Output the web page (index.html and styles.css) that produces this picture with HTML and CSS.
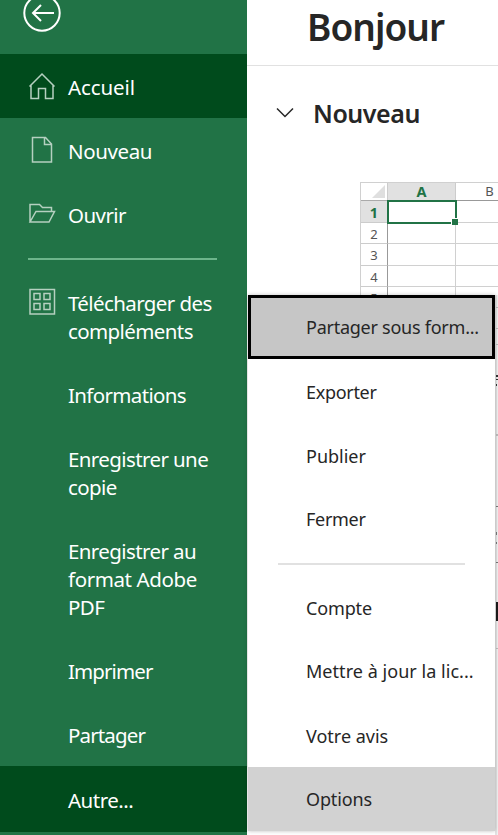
FILE: index.html
```html
<!DOCTYPE html>
<html lang="fr">
<head>
<meta charset="utf-8">
<title>Accueil</title>
<link rel="stylesheet" href="styles.css">
</head>
<body>
<div class="app">
  <nav class="side">
    <div class="back">
      <svg width="38" height="38" viewBox="0 0 38 38" fill="none" stroke="#fff" stroke-width="2"><circle cx="19" cy="19" r="17.700"/><path d="M31 19H10M18 11l-8 8 8 8"/></svg>
    </div>
    <a class="item top active"><svg class="icon" width="28" height="28" viewBox="0 0 28 28"><path d="M1.500 14.500L14 2l12.500 12.500M3 13V26.500H10.500V16.500H17.500V26.500H25V13"/></svg><span class="t-acc">Accueil</span></a>
    <a class="item top"><svg class="icon" width="28" height="28" viewBox="0 0 28 28"><path d="M4.500 1.500H17.500L23.500 8V26H4.500ZM16.500 1.500V8.500H23.500"/></svg><span class="t-nou">Nouveau</span></a>
    <a class="item top"><svg class="icon" width="28" height="28" viewBox="0 0 28 28"><path d="M2 22V4.500H11.500L14.500 7.500H23.500V11.500M2 22L8 11.500H26.500L21 22Z"/></svg><span class="t-ouv">Ouvrir</span></a>
    <hr class="rule">
    <a class="item"><svg class="icon" width="28" height="28" viewBox="0 0 28 28"><path d="M2 1.500H26.500V26H2ZM6 5.500H12V11.500H6ZM16 5.500H22V11.500H16ZM6 15.500H12V21.500H6ZM16 15.500H22V21.500H16Z"/></svg><span class="t-tel">Télécharger des<br>compléments</span></a>
    <a class="item"><span class="t-inf">Informations</span></a>
    <a class="item"><span class="t-enr">Enregistrer une<br>copie</span></a>
    <a class="item"><span class="t-pdf">Enregistrer au<br><span class="t-ado">format Adobe</span><br>PDF</span></a>
    <a class="item"><span class="t-imp">Imprimer</span></a>
    <a class="item short"><span class="t-par">Partager</span></a>
    <a class="item active last"><span class="t-aut">Autre...</span></a>
  </nav>
  <main class="main">
    <header class="hello"><h1>Bonjour</h1></header>
    <h2 class="section"><svg width="20" height="14" viewBox="0 0 20 14" fill="none" stroke="#262626" stroke-width="1.500"><path d="M2 2.500l8 8 8-8"/></svg><span>Nouveau</span></h2>
    <div class="sheet">
      <div class="corner"><svg width="13" height="13" viewBox="0 0 13 13"><path d="M13 0V13H0Z" fill="#dfdfdf"/></svg></div>
      <div class="col sel">A</div><div class="col">B</div>
      <div class="row sel">1</div><div class="cell picked"></div><div class="cell"></div>
      <div class="row">2</div><div class="cell"></div><div class="cell"></div>
      <div class="row">3</div><div class="cell"></div><div class="cell"></div>
      <div class="row">4</div><div class="cell"></div><div class="cell"></div>
      <div class="row">5</div><div class="cell"></div><div class="cell"></div>
    </div>
    <svg class="edge" width="3" height="540" viewBox="0 295 3 540">
      <path fill="#f1f1f1" d="M0 295h3v540H0z"/>
      <path fill="#e3e3e3" d="M0 295h2v540H0z"/>
      <path fill="#bdbdbd" d="M1 307h2v1H1zM1 328h2v1H1zM1 344h2v1H1zM1 434h2v2H1zM1 648h2v1H1z"/>
      <path fill="#333" d="M1 375h2v2H1zM1 379h2v1H1zM1 384h1v2H1z"/>
      <path fill="#777" d="M1 506h2v1H1zM1 532h1v3H1zM1 542h1v2H1zM1 562h2v1H1z"/>
      <path fill="#1c1c1c" d="M1 602h2v19H1z"/>
    </svg>
  </main>
  <div class="menu">
    <a class="opt focus"><span class="m-par">Partager sous form...</span></a>
    <a class="opt first"><span class="m-exp">Exporter</span></a>
    <a class="opt"><span>Publier</span></a>
    <a class="opt up"><span class="m-exp">Fermer</span></a>
    <hr class="line">
    <a class="opt"><span class="m-com">Compte</span></a>
    <a class="opt up"><span class="m-met">Mettre à jour la lic...</span></a>
    <a class="opt avis"><span>Votre avis</span></a>
    <a class="opt hover"><span class="m-com">Options</span></a>
  </div>
</div>
</body>
</html>
```
FILE: styles.css
```css
* { box-sizing: border-box; }
body { margin: 0; background: #fff; color: #262626; font-family: "Noto Sans", "Open Sans", sans-serif; }
.app { position: relative; display: flex; width: 498px; height: 835px; overflow: hidden; }
.side { width: 247px; flex: none; background: #217346; color: #fff; font-size: 20.500px; line-height: 28px; }
.back { height: 54px; padding-left: 23px; overflow: hidden; }
.back svg { display: block; margin-top: -6px; }
.item { display: flex; padding: 17px 0 19px 68px; white-space: nowrap; }
.item.top { padding: 19px 0 17px 68px; }
.item.top .icon { margin: -1px 12px 1px -40px; }
.item.active { background: #004b1c; }
.item.short { height: 62px; }
.item.last { height: 66px; padding-top: 20px; }
.icon { flex: none; margin: -1px 12px 1px -40px; fill: none; stroke: #b5d0c0; stroke-width: 1.500; }
.rule { width: 189px; height: 2px; margin: 12px 0 12px 28px; border: 0; background: #6db58b; }
.t-acc { letter-spacing: -.1px; }
.t-nou { letter-spacing: -.4px; }
.t-ouv { letter-spacing: -.55px; }
.t-tel, .t-enr { letter-spacing: -.6px; }
.t-inf { letter-spacing: -.65px; }
.t-pdf { letter-spacing: -.6px; }
.t-ado { letter-spacing: -.4px; }
.t-imp { letter-spacing: -.9px; }
.t-par { letter-spacing: -.85px; }
.t-aut { letter-spacing: -.5px; }
.main { width: 251px; flex: none; position: relative; overflow: hidden; }
.hello { height: 66px; border-bottom: 1px solid #e1e1e1; padding-left: 60px; }
h1 { margin: 0; font-size: 37px; line-height: 54px; font-weight: 600; letter-spacing: -.95px; }
.section { display: flex; align-items: center; height: 94px; margin: 0; padding-left: 28px; font-size: 25px; font-weight: 600; letter-spacing: -.45px; }
.section svg { margin-top: -1px; }
.section span { margin: -1px 0 0 18px; }
.sheet { display: grid; grid-template-columns: 27px 68px 68px; grid-template-rows: 18px 22px repeat(3, 21.300px) 9px; width: 165px; margin: 22px 0 0 113px; border: 1px solid #d0d0d0; border-width: 1px 0 0 1px; color: #555; font-size: 13px; text-align: center; overflow: hidden; }
.corner { border-right: 1px solid #ccc; border-bottom: 1px solid #aaa; padding: 2px 0 0 11px; }
.corner svg { display: block; }
.col { border-right: 1px solid #ccc; border-bottom: 1px solid #999; line-height: 16px; }
.sel { background: #e1e1e1; color: #217346; font-weight: 700; font-size: 14.500px; }
.row { border-right: 1px solid #999; border-bottom: 1px solid #ccc; line-height: 22px; }
.cell { border-right: 1px solid #d0d0d0; border-bottom: 1px solid #d0d0d0; }
.picked { position: relative; outline: 2px solid #217346; outline-offset: -1px; }
.picked::after { content: ""; position: absolute; right: -3px; bottom: -3px; width: 6px; height: 6px; background: #217346; border: 1px solid #fff; border-width: 1px 0 0 1px; }
.edge { position: absolute; right: 0; top: 295px; }
.menu { position: absolute; left: 248px; top: 295px; width: 247px; height: 536px; background: #fff; box-shadow: 0 0 4px rgba(0,0,0,.25); font-size: 18px; line-height: 24px; }
.opt { display: block; height: 64px; padding: 20px 0 20px 58px; white-space: nowrap; }
.opt.focus { background: #c6c6c6; border: 3px solid #000; padding: 17px 0 0 55px; }
.opt.first { height: 65px; padding-top: 21px; }
.opt.up { padding-top: 19px; }
.opt.avis { height: 63px; }
.m-par { letter-spacing: -.25px; }
.m-exp { letter-spacing: -.3px; }
.m-com { letter-spacing: -.15px; }
.m-met { letter-spacing: .04px; }
.line { width: 187px; height: 2px; margin: 11px 0 11px 30px; border: 0; background: #e1e1e1; }
.opt.hover { background: #d2d2d2; }
```
